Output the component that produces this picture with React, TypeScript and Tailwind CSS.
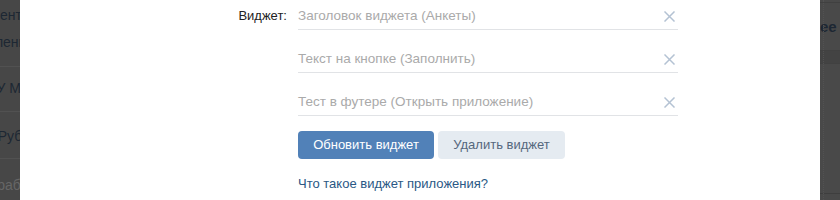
import React from "react";

function Cross() {
  return (
    <svg width="11" height="11" viewBox="0 0 11 11" className="block">
      <path d="M1 1 L10 10 M10 1 L1 10" stroke="#b4c2d3" strokeWidth="1.5" strokeLinecap="square" />
    </svg>
  );
}

function Field({ placeholder, first }: { placeholder: string; first?: boolean }) {
  return (
    <div
      className={`flex items-center h-[30px] pt-[6px] pb-[3px] border-b border-[#e1e3e6] w-[380px] ${first ? "" : "mt-[13px]"}`}
    >
      <div className="flex-1 h-[20px] leading-[20px] text-[13.5px] text-[#aaaaaa]">{placeholder}</div>
      <div className="mr-[3px]">
        <Cross />
      </div>
    </div>
  );
}

export default function App() {
  return (
    <div
      className="flex w-[840px] h-[200px] overflow-hidden bg-[#474747] text-[13px]"
      style={{ fontFamily: '"Liberation Sans", Arial, sans-serif' }}
    >
      {/* left strip */}
      <div className="w-[20px] h-[200px] overflow-hidden bg-[#474747] shrink-0">
        <div className="w-[60px] flex flex-col text-[#1d2733] text-[14px]">
          <div className="flex justify-end whitespace-nowrap h-[20px] leading-[20px] mt-[5px] pr-[38px]">Документ</div>
          <div className="flex justify-end whitespace-nowrap h-[20px] leading-[20px] mt-[7px] pr-[26px]">Объявления</div>
          <div className="h-[1px] bg-[#515151] mt-[14px]" />
          <div className="flex justify-end whitespace-nowrap h-[20px] leading-[20px] mt-[11px] pr-[10px]">ул. У Моста</div>
          <div className="h-[1px] bg-[#515151] mt-[13px]" />
          <div className="flex justify-end whitespace-nowrap h-[20px] leading-[20px] mt-[14px] pr-[23px]">100 Рубль</div>
          <div className="h-[1px] bg-[#515151] mt-[12px]" />
          <div className="flex justify-end whitespace-nowrap h-[20px] leading-[20px] mt-[16px] pr-[4px] text-[#666666]">Разработчик</div>
        </div>
      </div>

      {/* modal */}
      <div className="w-[800px] h-[200px] bg-white shrink-0 flex">
        <div className="w-[267px] shrink-0 text-right">
          <div className="mt-[6px] h-[20px] leading-[20px] text-[#222222]">Виджет:</div>
        </div>
        <div className="ml-[11px] flex flex-col">
          <Field first placeholder="Заголовок виджета (Анкеты)" />
          <Field placeholder="Текст на кнопке (Заполнить)" />
          <Field placeholder="Тест в футере (Открыть приложение)" />
          <div className="flex gap-[4px] mt-[15px]">
            <button className="w-[136px] h-[28px] rounded-[4px] bg-[#5181b8] text-white text-[13px] leading-[28px] text-center">
              Обновить виджет
            </button>
            <button className="w-[127px] h-[28px] rounded-[4px] bg-[#e5ebf1] text-[#55677d] text-[13px] leading-[28px] text-center">
              Удалить виджет
            </button>
          </div>
          <div className="mt-[15px] h-[20px] leading-[20px] text-[#2a5885]">Что такое виджет приложения?</div>
        </div>
      </div>

      {/* right strip */}
      <div className="w-[20px] h-[200px] overflow-hidden bg-[#494949] shrink-0 relative">
        <div className="h-[2px]" />
        <div className="h-[1px] bg-[#404040]" />
        <div className="h-[47px] flex items-center">
          <div className="whitespace-nowrap font-bold text-[15px] text-[#1d2733] h-[20px] leading-[20px]">ее</div>
        </div>
        <div className="h-[14px] bg-[#434343] border-y border-[#414141]" />
        <div className="h-[129px]" />
        <div className="h-[1px] bg-[#3e3e3e]" />
        <div className="absolute left-[3px] top-0 h-[200px] border-l border-dotted border-[#525252]" />
      </div>
    </div>
  );
}
